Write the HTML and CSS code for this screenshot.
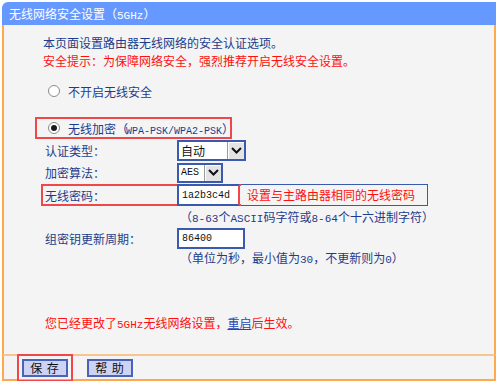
FILE: index.html
```html
<!DOCTYPE html>
<html lang="zh-CN">
<head>
<meta charset="utf-8">
<title>无线网络安全设置（5GHz）</title>
<link rel="stylesheet" href="styles.css">
</head>
<body>
<div class="panel">
  <div class="head">无线网络安全设置（<span class="lat">5GHz</span>）</div>
  <div class="content">
    <p class="intro">本页面设置路由器无线网络的安全认证选项。</p>
    <p class="warn">安全提示：为保障网络安全，强烈推荐开启无线安全设置。</p>
    <div class="opt opt-off"><span class="radio"></span><span class="opt-label">不开启无线安全</span></div>
    <div class="opt opt-on"><span class="radio checked"></span><span class="opt-label">无线加密<span class="paren">（</span><span class="mono">WPA-PSK/WPA2-PSK</span><span class="paren">）</span></span></div>
    <div class="row row-auth">
      <span class="label">认证类型：</span>
      <div class="sel sel-auth"><span class="sel-text">自动</span><span class="arrow"><svg width="11" height="7" viewBox="0 0 11 7"><path d="M1 1 L5.5 5.5 L10 1" fill="none" stroke="#111" stroke-width="2"/></svg></span></div>
    </div>
    <div class="row row-enc">
      <span class="label">加密算法：</span>
      <div class="sel sel-enc"><span class="sel-text mono">AES</span><span class="arrow"><svg width="11" height="7" viewBox="0 0 11 7"><path d="M1 1 L5.5 5.5 L10 1" fill="none" stroke="#111" stroke-width="2"/></svg></span></div>
    </div>
    <div class="row row-pwd">
      <div class="pwd-box">
        <span class="label">无线密码：</span>
        <div class="input input-pwd mono">1a2b3c4d</div>
      </div>
      <span class="pwd-note">设置与主路由器相同的无线密码</span>
    </div>
    <p class="hint hint-pwd">（<span class="lat">8-63</span>个<span class="lat">ASCII</span>码字符或<span class="lat">8-64</span>个十六进制字符）</p>
    <div class="row row-key">
      <span class="label">组密钥更新周期：</span>
      <div class="input input-key mono">86400</div>
    </div>
    <p class="hint hint-key">（单位为秒，最小值为<span class="lat">30</span>，不更新则为<span class="lat">0</span>）</p>
    <p class="notice">您已经更改了<span class="lat">5GHz</span>无线网络设置，<a class="link">重启</a>后生效。</p>
  </div>
  <div class="foot">
    <button class="btn btn-save">保 存</button>
    <button class="btn btn-help">帮 助</button>
  </div>
</div>
</body>
</html>
```
FILE: styles.css
```css
* { box-sizing: border-box; }
html, body { margin: 0; padding: 0; background: #ffffff; }
body {
  font-family: "Noto Sans CJK SC", "Noto Sans", sans-serif;
  font-size: 12px;
  color: #1d3c8c;
}
p { margin: 0; }
.mono { font-family: "Liberation Mono", "DejaVu Sans Mono", monospace; font-size: 10px; }
.lat { font-family: "Liberation Mono", "DejaVu Sans Mono", monospace; font-size: 11px; }
.paren { letter-spacing: -2px; }

.panel {
  width: 494px;
  margin: 2px 0 0 2px;
}
.head {
  height: 23px;
  background: #6699ff;
  color: #ffffff;
  font-size: 12px;
  line-height: 23px;
  padding-left: 7px;
  border-top-left-radius: 6px;
}
.content {
  height: 329px;
  background: #f4f4f4;
  border-left: 2px solid #ffa94f;
  border-right: 2px solid #ffa94f;
  padding-top: 9px;
  display: flex;
  flex-direction: column;
}
.intro, .warn { line-height: 18px; padding-left: 39px; }
.warn { color: #ff1010; }

.opt { display: flex; align-items: center; white-space: nowrap; }
.opt-off { height: 20px; margin-top: 11px; padding-left: 44px; }
.opt-on {
  height: 22px;
  margin: 16px 0 0 31px;
  width: 197px;
  border: 2px solid #f0474a;
  padding-left: 11px;
}
.radio {
  width: 12px; height: 12px;
  flex: none;
  border-radius: 50%;
  border: 1px solid #8a8a8a;
  background: #ffffff;
  display: inline-flex;
  align-items: center;
  justify-content: center;
  margin-right: 8px;
}
.radio.checked::after {
  content: "";
  width: 6px; height: 6px;
  border-radius: 50%;
  background: #1a1a1a;
}

.row { display: flex; align-items: center; white-space: nowrap; }
.label { width: 132px; flex: none; }
.row-auth { height: 21px; margin-top: 1px; padding-left: 41px; }
.row-enc { height: 21px; margin-top: 1px; padding-left: 41px; }

.sel {
  height: 21px;
  border: 2px solid #3a5aae;
  background: #ffffff;
  display: flex;
  align-items: center;
  justify-content: space-between;
  color: #111;
}
.sel-text { padding-left: 2px; }
.sel-auth { width: 69px; }
.sel-enc { width: 46px; height: 20px; }
.arrow {
  width: 17px; height: 100%;
  background: #e4e4e4;
  border-left: 1px solid #9a9a9a;
  box-shadow: inset 1px 1px 0 #ffffff;
  display: flex; align-items: center; justify-content: center;
}

.row-pwd { height: 22px; margin-top: 1px; padding-left: 37px; }
.pwd-box {
  display: flex; align-items: center;
  height: 22px;
  width: 200px;
  border: 2px solid #f0474a;
  border-right: none;
  padding-left: 2px;
}
.input {
  height: 21px;
  border: 2px solid #3a5aae;
  background: #ffffff;
  color: #111;
  display: flex; align-items: center;
  padding-left: 3px;
}
.input-pwd { width: 63px; height: 22px; border-right: 2px solid #f0474a; }
.pwd-note {
  height: 22px;
  width: 187px;
  border: 1px solid #3a5aae;
  border-left: none;
  color: #ff1010;
  line-height: 20px;
  padding-left: 6px;
}

.hint { line-height: 18px; padding-left: 176px; }
.hint-pwd { margin-top: 2px; }
.row-key { height: 21px; margin-top: 0; padding-left: 41px; }
.input-key { width: 68px; }
.hint-key { margin-top: 0; }

.notice { color: #ff1010; line-height: 18px; padding-left: 41px; margin-top: 45px; }
.link { color: #1f47b8; text-decoration: underline; }

.foot {
  height: 27px;
  background: #f4f4f4;
  border: 2px solid #ffa94f;
  border-top: 2px solid #f7c590;
  display: flex;
  align-items: center;
  padding-left: 18px;
  gap: 19px;
}
.btn {
  width: 46px; height: 18px;
  padding: 0;
  font-family: "Noto Sans CJK SC", sans-serif;
  font-size: 12px;
  line-height: 14px;
  color: #111;
  background: #cdd3f5;
  border: 2px solid #4a62b8;
  letter-spacing: 1px;
}
.btn-save { outline: 2px solid #f0474a; outline-offset: 3px; }
```
